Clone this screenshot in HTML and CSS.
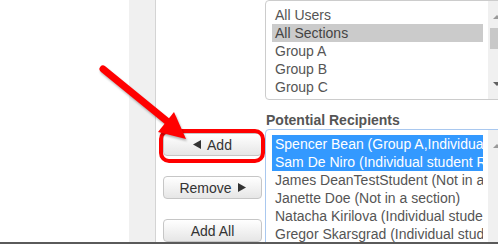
FILE: index.html
```html
<!DOCTYPE html>
<html lang="en">
<head>
  <meta charset="UTF-8" />
  <title>Recipients</title>
  <link rel="stylesheet" href="styles.css">
</head>
<body>

  <div class="screen">
    <div class="blank"></div>
    <div class="rail"></div>

    <div class="main">
      <div class="actions">
        <button class="btn">
          <svg class="tri" width="8" height="9" viewBox="0 0 8 9"><polygon points="8,0 8,9 0,4.5" /></svg>
          Add
        </button>
        <button class="btn">
          Remove
          <svg class="tri" width="8" height="9" viewBox="0 0 8 9"><polygon points="0,0 0,9 8,4.5" /></svg>
        </button>
        <button class="btn">Add All</button>
      </div>

      <div class="lists">
        <div class="listbox groups">
          <div class="opts">
            <div class="opt">All Users</div>
            <div class="opt sel-gray">All Sections</div>
            <div class="opt">Group A</div>
            <div class="opt">Group B</div>
            <div class="opt">Group C</div>
            <div class="opt">Individual students</div>
          </div>
          <div class="scroll">
            <span class="arrow up"></span>
            <span class="thumb"></span>
            <span class="arrow down"></span>
          </div>
        </div>

        <div class="label">Potential Recipients</div>

        <div class="listbox recipients">
          <div class="opts">
            <div class="opt sel-blue">Spencer Bean (Group A,Individual student Recipients)</div>
            <div class="opt sel-blue">Sam De Niro (Individual student Recipients)</div>
            <div class="opt">James DeanTestStudent (Not in a section)</div>
            <div class="opt">Janette Doe (Not in a section)</div>
            <div class="opt">Natacha Kirilova (Individual student Recipients)</div>
            <div class="opt">Gregor Skarsgrad (Individual student Recipients)</div>
            <div class="opt">Tom Hardy (Not in a section)</div>
          </div>
          <div class="scroll">
            <span class="arrow up"></span>
          </div>
        </div>
      </div>
    </div>

    <!-- callout drawn over the page -->
    <div class="highlight"></div>
    <svg class="pointer" width="498" height="242" viewBox="0 0 498 242">
      <line x1="103" y1="69" x2="168" y2="122" />
      <polygon points="186,139 174,112 158,132" />
    </svg>
  </div>

  <div class="taskbar"></div>

</body>
</html>
```

FILE: styles.css
```css
body {
  margin: 0;
  background-color: #ffffff;
  font-family: 'Liberation Sans', Arial, sans-serif;
  font-size: 14px;
  color: #555555;
  overflow: hidden;
}

.screen {
  position: relative;
  display: flex;
  height: 242px;
  overflow: hidden;
}

.blank {
  width: 129px;
  flex-shrink: 0;
}

.rail {
  width: 26px;
  flex-shrink: 0;
  background-color: #f0f0f0;
  border-right: 1px solid #d4d4d4;
}

.main {
  display: flex;
  gap: 3px;
  padding-left: 7px;
}

.actions {
  width: 99px;
  flex-shrink: 0;
  padding-top: 133px;
  display: flex;
  flex-direction: column;
  gap: 20px;
}

.btn {
  height: 25px;
  width: 99px;
  padding: 0;
  font-family: 'Liberation Sans', Arial, sans-serif;
  font-size: 14px;
  color: #333333;
  background: linear-gradient(#ffffff, #e6e6e6);
  border: 1px solid #c6c6c6;
  border-radius: 4px;
  display: flex;
  align-items: center;
  justify-content: center;
  gap: 6px;
}

.tri {
  fill: #333333;
}

.lists {
  width: 241px;
  flex-shrink: 0;
}

.listbox {
  display: flex;
  box-sizing: border-box;
  border: 1px solid #cccccc;
  border-radius: 4px;
  overflow: hidden;
}

.groups {
  height: 100px;
}

.recipients {
  height: 140px;
  border-color: #a9c8ef;
}

.opts {
  flex: 1;
  min-width: 0;
  padding: 5px 5px 0 6px;
  overflow: hidden;
}

.opt {
  height: 18px;
  line-height: 18px;
  padding-left: 3px;
  white-space: nowrap;
  overflow: hidden;
}

.sel-gray {
  background-color: #cbcbcb;
  color: #444444;
}

.sel-blue {
  background-color: #3399ff;
  color: #ffffff;
}

.scroll {
  position: relative;
  width: 17px;
  flex-shrink: 0;
  background-color: #f0f0f0;
}

.arrow {
  position: absolute;
  left: 5px;
  width: 0;
  height: 0;
  border-left: 4px solid transparent;
  border-right: 4px solid transparent;
}

.arrow.up {
  top: 14px;
  border-bottom: 4px solid #9a9a9a;
}

.arrow.down {
  bottom: 13px;
  border-top: 4px solid #606060;
}

.thumb {
  position: absolute;
  left: 2px;
  right: 1px;
  top: 27px;
  height: 21px;
  background-color: #c8c8c8;
}

.label {
  padding-top: 11px;
  line-height: 18px;
  font-weight: bold;
  padding-left: 1px;
}

.highlight {
  position: absolute;
  left: 159px;
  top: 129px;
  width: 106px;
  height: 34px;
  box-sizing: border-box;
  border: 4px solid #ff0000;
  border-radius: 10px;
}

.pointer {
  position: absolute;
  left: 0;
  top: 0;
  filter: drop-shadow(1px 2px 1px rgba(0, 0, 0, 0.3));
}

.pointer line {
  stroke: #ff0000;
  stroke-width: 7;
  stroke-linecap: round;
}

.pointer polygon {
  fill: #ff0000;
}

.taskbar {
  height: 2px;
  background-color: #5a5a5a;
}
```
